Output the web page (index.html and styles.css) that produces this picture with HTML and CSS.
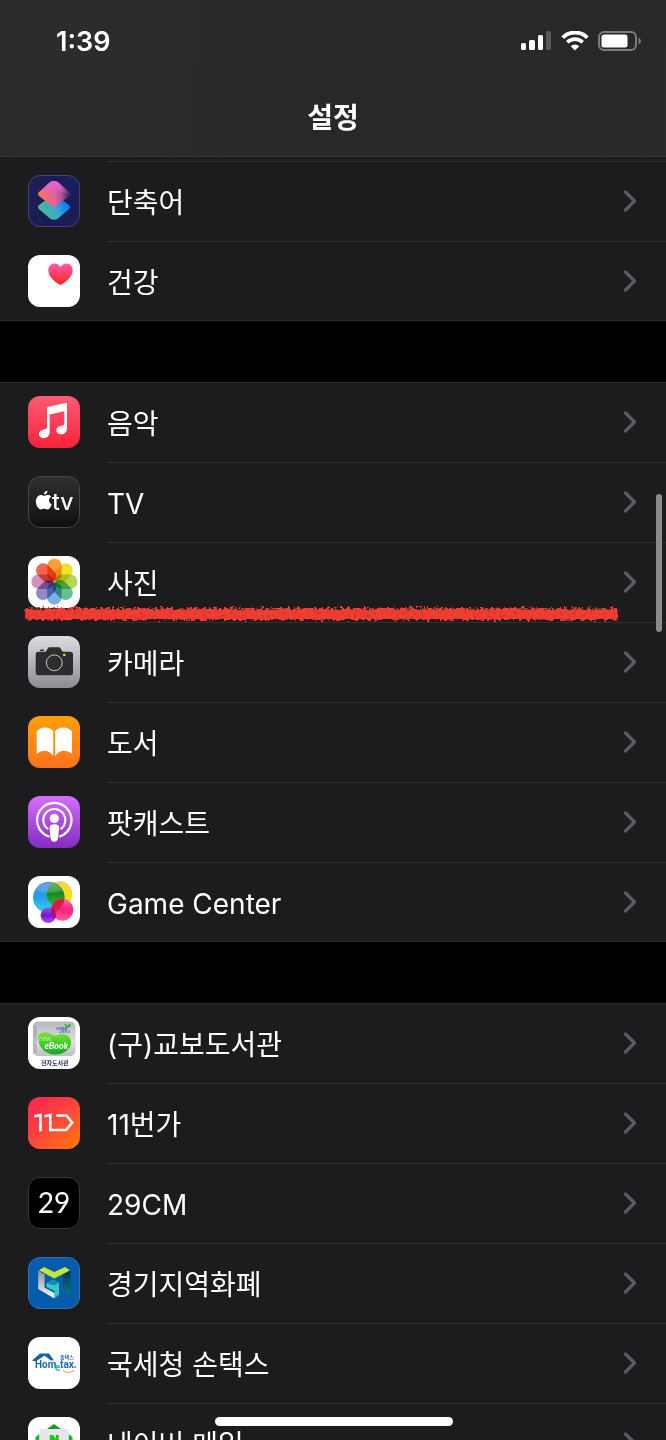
FILE: index.html
```html
<!DOCTYPE html>
<html lang="ko">
<head>
<meta charset="utf-8">
<meta name="viewport" content="width=device-width, initial-scale=1">
<title>설정</title>
<link rel="stylesheet" href="styles.css">
</head>
<body>
<svg class="defs" aria-hidden="true">
  <defs>
    <symbol id="chevron" viewBox="0 0 14 24"><path d="M2.500 3L11.500 12L2.500 21" fill="none" stroke="currentColor" stroke-width="3.400" stroke-linecap="round" stroke-linejoin="round"/></symbol>
  </defs>
</svg>
<div class="screen">
  <header class="header">
    <div class="status">
      <time class="clock">1:39</time>
      <div class="indicators">
        <svg width="31" height="20" viewBox="0 0 31 20" role="img" aria-label="신호"><g fill="#fff"><rect x="0" y="12" width="5" height="7" rx="1.500"/><rect x="8" y="9" width="6" height="10" rx="1.500"/><rect x="17" y="4" width="5" height="15" rx="1.500"/></g><rect x="25" y="0" width="5" height="19" rx="1.500" fill="#59595b"/></svg>
        <svg width="28" height="20" viewBox="0 0 28 20" role="img" aria-label="Wi-Fi"><g fill="none" stroke="#fff" stroke-width="4"><path d="M1.700 6.600a17.500 17.500 0 0 1 24.600 0"/><path d="M6.300 11.300a11 11 0 0 1 15.400 0" stroke-width="3.600"/></g><path d="M14 19.500l-4.300-4.300a6.200 6.200 0 0 1 8.600 0z" fill="#fff"/></svg>
        <svg width="44" height="21" viewBox="0 0 44 21" role="img" aria-label="배터리"><rect x="1" y="1" width="37" height="18" rx="5" fill="none" stroke="#7c7c7e" stroke-width="2"/><rect x="3.500" y="3.500" width="26" height="13" rx="2.500" fill="#fff"/><path d="M40.500 6.500q5 3.500 0 7z" fill="#7c7c7e"/></svg>
      </div>
    </div>
    <h1 class="title">설정</h1>
  </header>

  <main class="content">
    <nav class="group group-first">
      <a class="row" href="#shortcuts">
        <svg class="icon" viewBox="0 0 52 52" aria-hidden="true">
          <defs>
            <linearGradient id="sc1" x1="0" y1=".6" x2="1" y2=".5"><stop offset="0" stop-color="#ff705d"/><stop offset=".5" stop-color="#e2639f"/><stop offset=".75" stop-color="#b0559a"/><stop offset="1" stop-color="#4e2f66"/></linearGradient>
            <linearGradient id="sc0" x1="0" y1="0" x2="0" y2="1"><stop offset="0" stop-color="#e761ca"/><stop offset=".5" stop-color="#e761ca" stop-opacity="0"/></linearGradient>
            <linearGradient id="sc2" x1=".1" y1=".7" x2="1" y2=".4"><stop offset="0" stop-color="#45b89e"/><stop offset=".5" stop-color="#3da8cc"/><stop offset="1" stop-color="#087cfa"/></linearGradient>
          </defs>
          <rect width="52" height="52" rx="12" fill="#1b1d56"/>
          <path d="M26 22L39.500 32L29 41q-3 2.500-6 0L12.500 32z" fill="url(#sc2)" stroke="url(#sc2)" stroke-width="5" stroke-linejoin="round"/>
          <path d="M23 9.500q3-2 6 0L39.500 19L26 29.500L12.500 19z" fill="url(#sc1)" stroke="url(#sc1)" stroke-width="5" stroke-linejoin="round"/>
          <path d="M23 9.500q3-2 6 0L39.500 19L26 29.500L12.500 19z" fill="url(#sc0)" stroke="url(#sc0)" stroke-width="5" stroke-linejoin="round"/>
          <rect x=".5" y=".5" width="51" height="51" rx="11.500" fill="none" stroke="#45436c"/>
        </svg>
        <span class="body"><span class="label">단축어</span><svg class="chevron"><use href="#chevron"/></svg></span>
      </a>
      <a class="row" href="#health">
        <svg class="icon" viewBox="0 0 52 52" aria-hidden="true">
          <defs><linearGradient id="heart" x1="0" y1="0" x2="0" y2="1"><stop offset="0" stop-color="#ff5ab0"/><stop offset="1" stop-color="#ff2419"/></linearGradient></defs>
          <rect width="52" height="52" rx="12" fill="#fff"/>
          <path d="M32.500 30C28 28 20.300 22 20.300 15.600C20.300 11.500 23 8.500 26.400 8.500C29 8.500 31.300 9.800 32.500 12C33.700 9.800 36 8.500 38.600 8.500C42 8.500 44.700 11.500 44.700 15.600C44.700 22 37 28 32.500 30z" fill="url(#heart)"/>
        </svg>
        <span class="body"><span class="label">건강</span><svg class="chevron"><use href="#chevron"/></svg></span>
      </a>
    </nav>

    <nav class="group">
      <a class="row" href="#music">
        <svg class="icon" viewBox="0 0 52 52" aria-hidden="true">
          <defs><linearGradient id="music" x1="0" y1="0" x2="0" y2="1"><stop offset="0" stop-color="#fb5c74"/><stop offset="1" stop-color="#fa2339"/></linearGradient></defs>
          <rect width="52" height="52" rx="12" fill="url(#music)"/>
          <path d="M19 12.500Q19 11 20.500 10.700L37.500 7Q39 6.700 39 8.200V32C39 36 36.500 38.300 33 38.300C30 38.300 28.300 36.500 28.300 34.300C28.300 31.800 30 30.400 32.500 29.900L35 29.300Q36.300 29 36.300 27.500V15.300L21.700 18.500V35.800C21.700 39.800 19 42.200 15.700 42.200C12.600 42.200 10.900 40.400 10.900 38.100C10.900 35.800 12.500 34.200 15 33.700L17.500 33.100Q19 32.800 19 31.300z" fill="#fff"/>
        </svg>
        <span class="body"><span class="label">음악</span><svg class="chevron"><use href="#chevron"/></svg></span>
      </a>
      <a class="row" href="#tv">
        <svg class="icon" viewBox="0 0 52 52" aria-hidden="true">
          <defs><linearGradient id="tv" x1="0" y1="0" x2="0" y2="1"><stop offset="0" stop-color="#303030"/><stop offset="1" stop-color="#101010"/></linearGradient></defs>
          <rect x=".5" y=".5" width="51" height="51" rx="11.500" fill="url(#tv)" stroke="#454547"/>
          <path d="M16 19.800C17.200 19.800 18.200 19 20 19C21.400 19 22.500 19.700 23.200 20.700C20 22.500 20.500 27 23.800 28.300C23 30.500 21.500 33.500 19.500 33.500C18.200 33.500 17.600 32.800 16.200 32.800C14.800 32.800 14.100 33.500 12.900 33.500C10.500 33.500 7.900 29.500 7.900 25.500C7.900 21.500 10.300 19 13 19C14.400 19 15.300 19.800 16 19.800zM15.900 18.500C15.800 16.500 17.500 14.800 19.400 14.700C19.600 16.700 17.900 18.500 15.900 18.500z" fill="#fff"/>
          <text class="art-tv" x="24" y="33.500">tv</text>
        </svg>
        <span class="body"><span class="label">TV</span><svg class="chevron"><use href="#chevron"/></svg></span>
      </a>
      <a class="row row-marked" href="#photos">
        <svg class="icon" viewBox="0 0 52 52" aria-hidden="true">
          <rect width="52" height="52" rx="12" fill="#fff"/>
          <g class="petals" transform="translate(26.400 25.700)">
            <rect x="-7.200" y="-23" width="14.400" height="22.500" rx="7.200" fill="#f99f34"/>
            <rect x="-7.200" y="-23" width="14.400" height="22.500" rx="7.200" fill="#f2e12b" transform="rotate(45)"/>
            <rect x="-7.200" y="-23" width="14.400" height="22.500" rx="7.200" fill="#b5d654" transform="rotate(90)"/>
            <rect x="-7.200" y="-23" width="14.400" height="22.500" rx="7.200" fill="#67bf96" transform="rotate(135)"/>
            <rect x="-7.200" y="-23" width="14.400" height="22.500" rx="7.200" fill="#78b0e2" transform="rotate(180)"/>
            <rect x="-7.200" y="-23" width="14.400" height="22.500" rx="7.200" fill="#9089c8" transform="rotate(225)"/>
            <rect x="-7.200" y="-23" width="14.400" height="22.500" rx="7.200" fill="#d091bd" transform="rotate(270)"/>
            <rect x="-7.200" y="-23" width="14.400" height="22.500" rx="7.200" fill="#f06652" transform="rotate(315)"/>
          </g>
        </svg>
        <span class="body"><span class="label">사진</span><svg class="chevron"><use href="#chevron"/></svg></span>
        <svg class="brush" aria-hidden="true">
          <defs>
            <filter id="crayon" x="-2%" y="-50%" width="104%" height="200%">
              <feTurbulence type="fractalNoise" baseFrequency=".3" numOctaves="2" seed="4" result="n"/>
              <feDisplacementMap in="SourceGraphic" in2="n" scale="8" xChannelSelector="R" yChannelSelector="G" result="d"/>
              <feColorMatrix in="n" type="matrix" values="0 0 0 0 0  0 0 0 0 0  0 0 0 0 0  0 0 -4 0 3.200" result="m"/>
              <feComposite in="d" in2="m" operator="in"/>
              <feGaussianBlur stdDeviation=".4"/>
            </filter>
          </defs>
          <rect x="1" y="5" width="99.600%" height="9" fill="#c9342b"/>
          <g filter="url(#crayon)"><rect x="1" y="3" width="99.600%" height="12" fill="#f03c32"/></g>
        </svg>
      </a>
      <a class="row" href="#camera">
        <svg class="icon" viewBox="0 0 52 52" aria-hidden="true">
          <defs><linearGradient id="cam" x1="0" y1="0" x2="0" y2="1"><stop offset="0" stop-color="#dddce1"/><stop offset="1" stop-color="#8d8c91"/></linearGradient></defs>
          <rect width="52" height="52" rx="12" fill="url(#cam)"/>
          <path d="M12 15v-.600q0-1 1-1h2q1 0 1 1v.600z" fill="#2c2c2e"/>
          <path d="M10.500 15.700H17Q18 15.700 18.600 14.500L19.500 12.700Q20.300 11.300 21.800 11.300H30.500Q32 11.300 32.800 12.700L33.700 14.500Q34.300 15.700 35.500 15.700H42.200Q45 15.700 45 18.500V36.500Q45 39.300 42.200 39.300H10.500Q7.700 39.300 7.700 36.500V18.500Q7.700 15.700 10.500 15.700z" fill="#2c2c2e"/>
          <circle cx="26.300" cy="26.800" r="7.900" fill="none" stroke="#c9c9cd" stroke-width="1"/>
          <circle cx="36.300" cy="19" r="1.300" fill="#ffd60a"/>
        </svg>
        <span class="body"><span class="label">카메라</span><svg class="chevron"><use href="#chevron"/></svg></span>
      </a>
      <a class="row" href="#books">
        <svg class="icon" viewBox="0 0 52 52" aria-hidden="true">
          <defs><linearGradient id="books" x1="0" y1="0" x2="0" y2="1"><stop offset="0" stop-color="#ff9f0a"/><stop offset="1" stop-color="#fd721c"/></linearGradient></defs>
          <rect width="52" height="52" rx="12" fill="url(#books)"/>
          <path d="M8.700 15.500Q12 11.500 17 11.500Q22.500 11.500 25.300 15V40.300Q22 34.800 16.500 34.800Q12.500 34.800 8.700 37.700zM27.200 15Q30 11.500 35.500 11.500Q40.500 11.500 44 15.500V37.700Q40 34.800 36 34.800Q30.500 34.800 27.200 40.300z" fill="#fff"/>
        </svg>
        <span class="body"><span class="label">도서</span><svg class="chevron"><use href="#chevron"/></svg></span>
      </a>
      <a class="row" href="#podcasts">
        <svg class="icon" viewBox="0 0 52 52" aria-hidden="true">
          <defs><linearGradient id="pod" x1="0" y1="0" x2="0" y2="1"><stop offset="0" stop-color="#d56efc"/><stop offset="1" stop-color="#832bc1"/></linearGradient></defs>
          <rect width="52" height="52" rx="12" fill="url(#pod)"/>
          <g fill="none" stroke="#fff" stroke-width="2.200" stroke-linecap="round">
            <path d="M20.500 40.300A17.200 17.200 0 1 1 32.100 40.300"/>
            <path d="M19.300 32.500A11 11 0 1 1 33.300 32.500"/>
          </g>
          <circle cx="26.300" cy="22.400" r="4.600" fill="#fff"/>
          <path d="M26.300 28.300C29.800 28.300 31.300 29.500 31.100 32.200L30.100 42Q29.700 45.700 26.300 45.700Q22.900 45.700 22.500 42L21.500 32.200C21.300 29.500 22.800 28.300 26.300 28.300z" fill="#fff"/>
        </svg>
        <span class="body"><span class="label">팟캐스트</span><svg class="chevron"><use href="#chevron"/></svg></span>
      </a>
      <a class="row" href="#gamecenter">
        <svg class="icon" viewBox="0 0 52 52" aria-hidden="true">
          <defs>
            <linearGradient id="gb" x1="0" y1="0" x2="0" y2="1"><stop offset="0" stop-color="#4b8fe0"/><stop offset=".45" stop-color="#249be9"/><stop offset="1" stop-color="#35d5fb"/></linearGradient>
            <linearGradient id="gy" x1="0" y1="0" x2="0" y2="1"><stop offset="0" stop-color="#f6d54c"/><stop offset="1" stop-color="#f5e500"/></linearGradient>
            <linearGradient id="gg" x1="0" y1="0" x2="0" y2="1"><stop offset="0" stop-color="#6ba94a"/><stop offset=".5" stop-color="#148c1e"/><stop offset="1" stop-color="#3bbc13"/></linearGradient>
            <linearGradient id="gp" x1="0" y1="0" x2="0" y2="1"><stop offset="0" stop-color="#f66bb0"/><stop offset=".5" stop-color="#f82276"/><stop offset="1" stop-color="#ff5da5"/></linearGradient>
            <linearGradient id="gv" x1="0" y1="0" x2="0" y2="1"><stop offset="0" stop-color="#9a57d7"/><stop offset=".5" stop-color="#7416cf"/><stop offset="1" stop-color="#ae49fb"/></linearGradient>
            <clipPath id="blueclip"><circle cx="20.800" cy="21.500" r="15.700"/></clipPath>
            <clipPath id="pinkclip"><circle cx="34.300" cy="33.700" r="11"/></clipPath>
          </defs>
          <rect width="52" height="52" rx="12" fill="#fff"/>
          <circle cx="31.500" cy="18" r="12.800" fill="url(#gy)"/>
          <circle cx="20.800" cy="21.500" r="15.700" fill="url(#gb)"/>
          <circle cx="31.500" cy="18" r="12.800" fill="url(#gg)" clip-path="url(#blueclip)"/>
          <circle cx="20.300" cy="39.300" r="7.700" fill="url(#gv)"/>
          <circle cx="34.300" cy="33.700" r="11" fill="url(#gp)"/>
          <circle cx="20.800" cy="21.500" r="15.700" fill="#d81d48" clip-path="url(#pinkclip)"/>
          <circle cx="20.300" cy="39.300" r="7.700" fill="#a90d78" clip-path="url(#pinkclip)"/>
          <path d="M8 14C14 4 28 4 34 14Q21 20 8 14z" fill="#fff" opacity=".16"/>
        </svg>
        <span class="body"><span class="label">Game Center</span><svg class="chevron"><use href="#chevron"/></svg></span>
      </a>
    </nav>

    <nav class="group group-last">
      <a class="row" href="#kyobo">
        <svg class="icon" viewBox="0 0 52 52" aria-hidden="true">
          <defs>
            <linearGradient id="kg" x1="0" y1="0" x2="0" y2="1"><stop offset="0" stop-color="#b5b7ba"/><stop offset=".6" stop-color="#dfe0e2"/><stop offset="1" stop-color="#bcbec0"/></linearGradient>
            <linearGradient id="kb" x1="0" y1="0" x2="0" y2="1"><stop offset="0" stop-color="#7fe03a"/><stop offset=".6" stop-color="#35cb24"/><stop offset="1" stop-color="#17a31a"/></linearGradient>
          </defs>
          <rect width="52" height="52" rx="12" fill="#fff"/>
          <rect x="5" y="4.500" width="42.500" height="34.500" rx="5" fill="url(#kg)"/>
          <path d="M5 9V37L9 35V8z" fill="#8f9296" opacity=".4"/>
          <path d="M10 22C9.500 17 14 15 18 15.300C22 15.600 24 18.500 27 18.500C30 18.500 32 16.500 36 17.300C41 18 43.500 22 43 26.500C42.300 33 35 37.500 27 37.500C18 37.500 11 31 10 22z" fill="url(#kb)"/>
          <path d="M39 12q0-2.500-3-5q3 0 3.500 2q1-2 3.300-2q0 3-3 3.500z" fill="#2aa53d"/>
          <text class="art-kyobo" x="28.500" y="13">KYOBO</text>
          <text class="art-kyobo" x="31" y="16">교보문고</text>
          <text class="art-new" x="11" y="24">new</text>
          <text class="art-ebook" x="16.500" y="32">eBook</text>
          <text class="art-library" x="13" y="47.500">전자도서관</text>
        </svg>
        <span class="body"><span class="label">(구)교보도서관</span><svg class="chevron"><use href="#chevron"/></svg></span>
      </a>
      <a class="row" href="#11st">
        <svg class="icon" viewBox="0 0 52 52" aria-hidden="true">
          <defs><linearGradient id="st" x1=".25" y1=".1" x2="1" y2="1"><stop offset="0" stop-color="#fa2d4c"/><stop offset=".45" stop-color="#fc4b38"/><stop offset="1" stop-color="#ff7a00"/></linearGradient></defs>
          <rect width="52" height="52" rx="12" fill="url(#st)"/>
          <path d="M6.300 19.300L12.500 18V34.300M16.500 19.300L22.300 18V33H38L44.200 25.700L38.500 18.500H28.300" fill="none" stroke="#fff" stroke-width="2.600"/>
        </svg>
        <span class="body"><span class="label">11번가</span><svg class="chevron"><use href="#chevron"/></svg></span>
      </a>
      <a class="row" href="#29cm">
        <svg class="icon" viewBox="0 0 52 52" aria-hidden="true">
          <rect x=".5" y=".5" width="51" height="51" rx="11.500" fill="#000" stroke="#38383a"/>
          <text class="art-29" x="26" y="35.500">29</text>
        </svg>
        <span class="body"><span class="label">29CM</span><svg class="chevron"><use href="#chevron"/></svg></span>
      </a>
      <a class="row" href="#gyeonggi">
        <svg class="icon" viewBox="0 0 52 52" aria-hidden="true">
          <defs>
            <linearGradient id="gl" x1="0" y1="0" x2="0" y2="1"><stop offset="0" stop-color="#909197"/><stop offset=".7" stop-color="#d9d9de"/><stop offset="1" stop-color="#fff"/></linearGradient>
            <linearGradient id="gr" x1="0" y1="0" x2="0" y2="1"><stop offset="0" stop-color="#06354f"/><stop offset="1" stop-color="#087486"/></linearGradient>
          </defs>
          <rect x=".5" y=".5" width="51" height="51" rx="11.500" fill="#065cac" stroke="#3770ae"/>
          <path d="M10.200 13.500L16.500 17.500V30.500L26.500 36V41.500L10.200 32z" fill="url(#gl)"/>
          <path d="M18.500 26.500L24.500 22.500L31 25.500V37.500L26.500 41.500V34L18.500 30z" fill="#35c8c9"/>
          <path d="M24.500 22.500L31 25.500L26.500 28.500L18.500 26z" fill="#168da6"/>
          <path d="M42.500 13V37.500L35 36V18z" fill="url(#gr)"/>
          <path d="M11 13.200L16 10L26.300 15L37 10L42 13.200L26.300 21.500z" fill="#c5e637"/>
        </svg>
        <span class="body"><span class="label">경기지역화폐</span><svg class="chevron"><use href="#chevron"/></svg></span>
      </a>
      <a class="row" href="#hometax">
        <svg class="icon" viewBox="0 0 52 52" aria-hidden="true">
          <rect width="52" height="52" rx="12" fill="#fff"/>
          <path d="M4 23.500L12 16.500H21L26 23.500H23L16.500 18.700L7.500 24.500z" fill="#1862a9"/>
          <text class="art-home" x="7" y="31">Hom</text>
          <text class="art-e" x="27" y="33.500">e</text>
          <text class="art-home" x="32" y="31">tax.</text>
          <text class="art-hometax" x="32" y="22">홈택스</text>
          <path d="M35 33.500Q40.500 37.500 46 33.500" fill="none" stroke="#f4aa43" stroke-width="1.200"/>
        </svg>
        <span class="body"><span class="label">국세청 손택스</span><svg class="chevron"><use href="#chevron"/></svg></span>
      </a>
      <a class="row" href="#navermail">
        <svg class="icon" viewBox="0 0 52 52" aria-hidden="true">
          <rect width="52" height="52" rx="12" fill="#fff"/>
          <path d="M19 12L26 7L33 12z" fill="#169b30"/>
          <path d="M7.500 20L11.500 17V44H7.500zM44.500 20L40.500 17V44H44.500z" fill="#20b23c"/>
          <path d="M11.500 12H40.500V38H11.500z" fill="#e7e7e9"/>
          <path d="M21.800 18H25.200L28 21.700V18H30.700V27H27.500L24.600 23V27H21.800z" fill="#1ec800"/>
        </svg>
        <span class="body"><span class="label">네이버 메일</span><svg class="chevron"><use href="#chevron"/></svg></span>
      </a>
    </nav>
  </main>
  <div class="scroll-thumb"></div>
  <div class="home-indicator"></div>
</div>
</body>
</html>
```
FILE: styles.css
```css
* {
  box-sizing: border-box;
}

body {
  margin: 0;
  background: #000;
  color: #fff;
  font-family: Inter, "Noto Sans CJK KR", sans-serif;
}

.defs {
  position: absolute;
  width: 0;
  height: 0;
}

.screen {
  position: relative;
  display: flex;
  flex-direction: column;
  height: 100vh;
  overflow: hidden;
}

.header {
  flex: none;
  background: linear-gradient(95deg, #2c2b2a 0%, #2c2c2d 22%, #28282a 36%, #28282a 90%, #2a2a2a 100%);
  border-bottom: 1px solid #38383a;
}

.status {
  display: flex;
  align-items: center;
  justify-content: space-between;
  height: 82px;
  padding: 0 24px 0 56px;
}

.clock {
  padding-top: 2px;
  font-size: 27px;
  font-weight: 600;
  line-height: 32px;
}

.indicators {
  display: flex;
  align-items: center;
  gap: 9px;
}

.indicators svg {
  display: block;
}

.title {
  margin: 0;
  padding: 16px 0 18px;
  font-size: 28px;
  font-weight: 600;
  line-height: 40px;
  text-align: center;
}

.content {
  display: flex;
  flex-direction: column;
  flex: 1;
  gap: 61px;
  min-height: 0;
  overflow: hidden;
}

.group {
  flex: none;
  background: #1c1c1e;
  box-shadow: inset 0 1px #2d2d2f, inset 0 -1px #2d2d2f;
}

.group-first {
  padding-top: 4px;
  box-shadow: inset 0 -1px #2d2d2f;
}

.row {
  position: relative;
  display: flex;
  align-items: center;
  gap: 27px;
  height: 80px;
  padding-left: 28px;
  color: inherit;
  text-decoration: none;
}

.icon {
  flex: none;
  display: block;
  width: 52px;
  height: 52px;
}

.body {
  flex: 1;
  display: flex;
  align-items: center;
  justify-content: space-between;
  height: 80px;
  padding: 0 29px 2px 0;
  border-top: 1px solid #303033;
}

.group:not(.group-first) .row:first-child .body {
  border-top-color: transparent;
}

.label {
  padding-top: 4px;
  font-size: 28px;
  line-height: 40px;
  white-space: nowrap;
}

.chevron {
  flex: none;
  width: 14px;
  height: 24px;
  color: #5b5b60;
}

.brush {
  position: absolute;
  left: 24px;
  bottom: -2px;
  width: calc(100% - 71px);
  height: 19px;
  overflow: visible;
}

.petals {
  isolation: isolate;
}

.petals rect {
  mix-blend-mode: multiply;
}

.art-tv {
  fill: #fff;
  font-size: 23px;
  font-weight: 500;
}

.art-29 {
  fill: #fff;
  font-family: Lato, sans-serif;
  font-size: 28px;
  font-weight: 400;
  text-anchor: middle;
}

.art-kyobo {
  fill: #33689b;
  font-size: 3px;
  font-weight: 700;
}

.art-new {
  fill: #c9f5a5;
  font-size: 6px;
}

.art-ebook {
  fill: #fff;
  font-family: Lato, sans-serif;
  font-size: 9px;
  font-style: italic;
  font-weight: 700;
}

.art-library {
  fill: #28366b;
  font-size: 6px;
  font-weight: 700;
}

.art-home {
  fill: #1a68ad;
  font-family: Roboto, sans-serif;
  font-size: 10px;
  font-weight: 700;
}

.art-e {
  fill: #2cb0cf;
  font-family: Roboto, sans-serif;
  font-size: 10px;
  font-weight: 700;
}

.art-hometax {
  fill: #1a68ad;
  font-size: 5px;
  font-weight: 700;
}

.scroll-thumb {
  position: absolute;
  top: 494px;
  right: 4px;
  width: 6px;
  height: 138px;
  border-radius: 3px;
  background: #8a8a8c;
}

.home-indicator {
  position: absolute;
  bottom: 14px;
  left: 50%;
  width: 238px;
  height: 9px;
  margin-left: -118px;
  border-radius: 5px;
  background: #fff;
}
```
